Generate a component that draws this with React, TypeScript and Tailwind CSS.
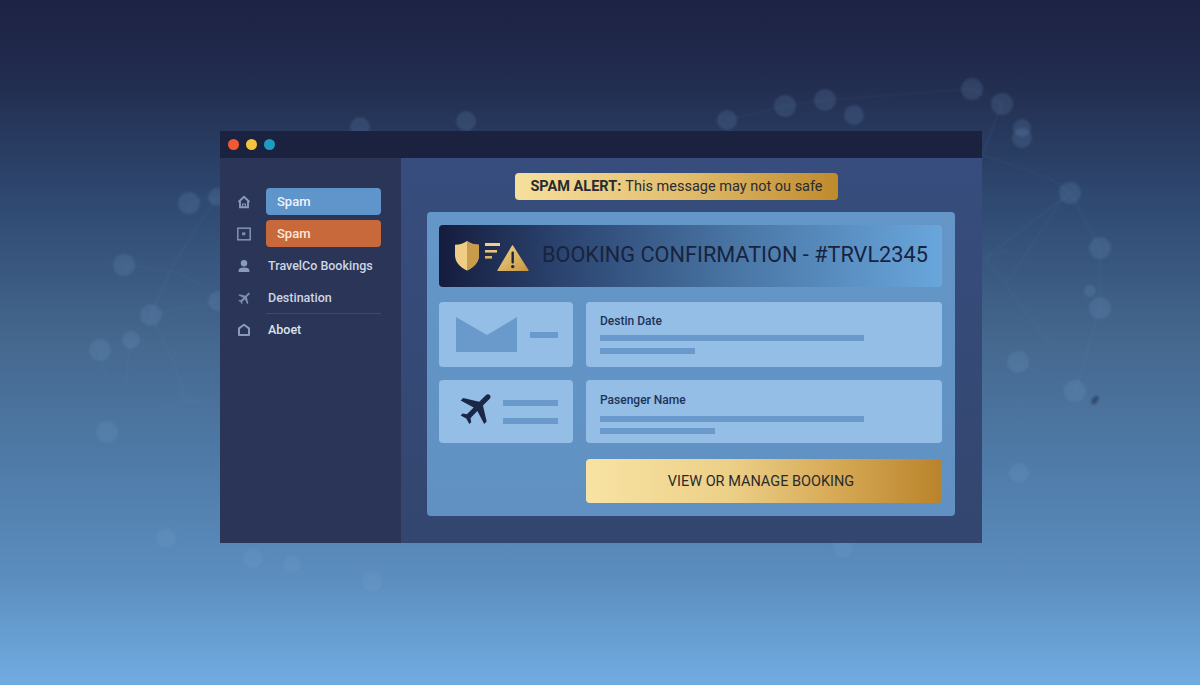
const NODES: [number, number, number][] = [
  [189, 203, 11], [124, 265, 11], [151, 315, 11], [100, 350, 11], [131, 340, 9], [107, 432, 11], [166, 538, 10],
  [217, 197, 9], [218, 301, 10], [360, 127, 10], [466, 121, 10], [727, 120, 10], [785, 106, 11], [825, 100, 11],
  [854, 115, 10], [972, 89, 11], [1002, 104, 11], [1022, 128, 9], [1022, 138, 10], [1070, 193, 11], [1100, 248, 11],
  [1090, 291, 6], [1100, 308, 11], [1018, 362, 11], [1075, 391, 11], [1019, 473, 10], [843, 548, 10], [253, 558, 10],
  [292, 564, 9], [372, 582, 10],
];

const LINES: string[] = [
  "M189 203 L217 197 L176 260 L150 315 L218 301",
  "M124 265 L176 272 L200 285",
  "M151 315 L175 365 L185 400 L211 405",
  "M100 350 L105 375",
  "M131 340 L125 385",
  "M165 405 L211 400",
  "M727 120 L785 106 L825 100 L972 89 L1002 104",
  "M982 155 L1002 104",
  "M982 155 L1050 178 L1070 193 L1100 248 L1100 308 L1075 391",
  "M1070 193 L985 258 L1008 250",
  "M1063 198 L1005 285",
  "M985 258 L1055 350",
  "M1018 362 L1075 391",
];

function Backdrop() {
  return (
    <svg className="absolute inset-0 h-full w-full blur-[0.8px]" viewBox="0 0 1200 685" fill="none">
      <g stroke="#8fb4da" strokeOpacity="0.09" strokeWidth="1.2">
        {LINES.map((d) => (
          <path key={d} d={d} />
        ))}
      </g>
      <g fill="#7ba6d2" fillOpacity="0.17">
        {NODES.map(([cx, cy, r]) => (
          <circle key={`${cx}-${cy}`} cx={cx} cy={cy} r={r} />
        ))}
      </g>
      <ellipse cx="1095" cy="400" rx="3" ry="5" transform="rotate(35 1095 400)" fill="#2b3f5f" fillOpacity="0.7" />
    </svg>
  );
}

function HomeIcon() {
  return (
    <svg viewBox="0 0 14 14" className="h-[14px] w-[14px]" fill="none" stroke="#8a9bb8" strokeWidth="1.9">
      <path d="M1.5 7 7 1.8 12.5 7M3 6v6.2h8V6" />
      <path d="M5.6 12V9h2.8v3" strokeWidth="1.1" />
    </svg>
  );
}

function BoxIcon() {
  return (
    <svg viewBox="0 0 14 14" className="h-[14px] w-[14px]" fill="none" stroke="#7d8eac" strokeWidth="1.6">
      <rect x="0.8" y="1.2" width="12.4" height="11.6" />
      <rect x="5" y="5.4" width="3.4" height="2.8" fill="#7d8eac" stroke="none" />
    </svg>
  );
}

function UserIcon() {
  return (
    <svg viewBox="0 0 14 14" className="h-[14px] w-[14px]" fill="#8a9bb8">
      <circle cx="7" cy="4.2" r="3.2" />
      <path d="M1.6 13v-1.4C1.6 9.8 3.4 8.6 7 8.6s5.4 1.2 5.4 3V13z" />
    </svg>
  );
}

function PlaneIcon({ className, fill }: { className: string; fill: string }) {
  return (
    <svg viewBox="0 0 24 24" className={className} fill={fill}>
      <path
        transform="rotate(45 12 12)"
        d="M21 16v-2l-8-5V3.5c0-.83-.67-1.5-1.5-1.5S10 2.67 10 3.5V9l-8 5v2l8-2.5V19l-2 1.5V22l3.5-1 3.5 1v-1.5L13 19v-5.5l8 2.5z"
      />
    </svg>
  );
}

function AboutIcon() {
  return (
    <svg viewBox="0 0 14 14" className="h-[14px] w-[14px]" fill="none" stroke="#8a9bb8" strokeWidth="2">
      <path d="M7 1.8 12 5.4V12H2V5.4z" strokeLinejoin="round" />
    </svg>
  );
}

function AlertIcons() {
  return (
    <svg viewBox="0 0 76 32" className="h-8 w-[76px] shrink-0" fill="none">
      <defs>
        <linearGradient id="gold-a" x1="0" y1="0" x2="1" y2="1">
          <stop offset="0" stopColor="#f3d68f" />
          <stop offset="1" stopColor="#c4943f" />
        </linearGradient>
      </defs>
      <path d="M13 1 C16 3.5 20 4.6 25 4.8 V15 C25 22 20 27.5 13 30.5 C6 27.5 1 22 1 15 V4.8 C6 4.6 10 3.5 13 1z" fill="#efcd85" />
      <path d="M13 1 C16 3.5 20 4.6 25 4.8 V15 C25 22 20 27.5 13 30.5z" fill="#c99c4d" />
      <rect x="31" y="3" width="15" height="3" fill="#efcf8a" />
      <rect x="31" y="10" width="12" height="2.6" fill="#e6c27a" />
      <rect x="31" y="16" width="7" height="2.6" fill="#d9b163" />
      <path d="M59 5.5 74.5 30 Q75 31 74 31 H44 Q43 31 43.5 30 L58 5.5 Q58.5 4.5 59 5.5z" fill="url(#gold-a)" />
      <rect x="57.5" y="11.5" width="2.4" height="12" rx="1" fill="#1d2540" />
      <circle cx="58.7" cy="26.6" r="1.7" fill="#1d2540" />
    </svg>
  );
}

const NAV_ROWS = [
  { label: "TravelCo Bookings", icon: <UserIcon /> },
  { label: "Destination", icon: <PlaneIcon className="h-4 w-4" fill="#7d8eac" /> },
];

export default function App() {
  return (
    <div className="relative h-[685px] w-[1200px] overflow-hidden bg-[linear-gradient(180deg,#1c2243_0%,#222d4f_12%,#2f4a72_30%,#45688f_50%,#4f7ba8_68%,#5b8dbe_84%,#71ace1_100%)] pl-[220px] pt-[131px] font-['Roboto',sans-serif]">
      <Backdrop />

      <div className="relative flex h-[412px] w-[762px] flex-col">
        {/* Title bar */}
        <div className="flex h-[27px] items-center gap-[7px] bg-[#1b2240] pb-[1px] pl-[8px]">
          <span className="h-[11px] w-[11px] rounded-full bg-[#ee5a36]" />
          <span className="h-[11px] w-[11px] rounded-full bg-[#f2c53d]" />
          <span className="h-[11px] w-[11px] rounded-full bg-[#1f9bc0]" />
        </div>

        <div className="flex flex-1">
          {/* Sidebar */}
          <div className="flex w-[181px] flex-col gap-[5px] bg-[#2a3557] pl-[17px] pr-[20px] pt-[30px]">
            <div className="flex h-[27px] items-center">
              <div className="flex w-[29px] justify-start"><HomeIcon /></div>
              <div className="flex h-[27px] flex-1 items-center rounded-[4px] bg-[#5f95cb] pl-[11px] text-[13px] font-medium text-[#eef4fb]">
                Spam
              </div>
            </div>
            <div className="flex h-[27px] items-center">
              <div className="flex w-[29px] justify-start"><BoxIcon /></div>
              <div className="flex h-[27px] flex-1 items-center rounded-[4px] bg-[#c8693b] pl-[11px] text-[13px] font-medium text-[#f8e9df]">
                Spam
              </div>
            </div>
            {NAV_ROWS.map((row) => (
              <div key={row.label} className="flex h-[27px] items-center">
                <div className="flex w-[31px] justify-start">{row.icon}</div>
                <span className="pt-[1px] text-[12.5px] font-medium text-[#ced6e4]">{row.label}</span>
              </div>
            ))}
            <div className="-my-[3px] ml-[29px] h-px bg-[#3c4a70]" />
            <div className="flex h-[27px] items-center">
              <div className="flex w-[31px] justify-start"><AboutIcon /></div>
              <span className="pt-[2px] text-[12.5px] font-medium text-[#dde3ed]">Aboet</span>
            </div>
          </div>

          {/* Main */}
          <div className="flex flex-1 flex-col bg-[linear-gradient(180deg,#374d7d_0%,#33466f_100%)] pl-[26px] pr-[27px] pt-[15px]">
            <div className="ml-[88px] flex h-[27px] w-[323px] items-center justify-center rounded-[4px] bg-[linear-gradient(90deg,#f6df9d_0%,#e3c070_50%,#bf8a2c_100%)] text-[14.5px] text-[#2a2a33]">
              <span className="font-bold">SPAM ALERT:</span>
              <span className="ml-[4px]">This message may not ou safe</span>
            </div>

            <div className="mt-[12px] flex h-[304px] flex-col rounded-[4px] bg-[linear-gradient(180deg,#6496c8_0%,#6091c2_100%)] pl-[12px] pr-[13px] pt-[13px]">
              <div className="flex h-[62px] items-center rounded-[4px] bg-[linear-gradient(90deg,#151c3d_0%,#2c4571_25%,#4a77a6_60%,#69a6dc_100%)] pl-[15px]">
                <AlertIcons />
                <span className="mb-[2px] ml-[12px] text-[21.7px] text-[#18233f]">
                  BOOKING CONFIRMATION - #TRVL2345
                </span>
              </div>

              <div className="mt-[15px] flex h-[65px] gap-[13px]">
                <div className="flex w-[134px] items-center rounded-[4px] bg-[#94bee6] pl-[17px]">
                  <svg viewBox="0 0 61 35" className="h-[35px] w-[61px]" fill="#6a9acb">
                    <path d="M0 0 L31 18 L61 0 V35 H0z" />
                  </svg>
                  <div className="ml-[13px] h-[6px] w-[28px] bg-[#6a9acb]" />
                </div>
                <div className="flex flex-1 flex-col rounded-[4px] bg-[#94bee6] pl-[14px] pt-[12px]">
                  <span className="text-[12px] font-medium leading-[15px] text-[#1d3358]">Destin Date</span>
                  <div className="mt-[6px] h-[6px] w-[264px] bg-[#6a9acb]" />
                  <div className="mt-[7px] h-[6px] w-[95px] bg-[#6a9acb]" />
                </div>
              </div>

              <div className="mt-[13px] flex h-[63px] gap-[13px]">
                <div className="flex w-[134px] items-center rounded-[4px] bg-[#94bee6] pl-[18px]">
                  <PlaneIcon className="mb-[8px] h-[42px] w-[42px]" fill="#1a2747" />
                  <div className="ml-[4px] flex flex-col gap-[12px]">
                    <div className="h-[6px] w-[55px] bg-[#6a9acb]" />
                    <div className="h-[6px] w-[55px] bg-[#6a9acb]" />
                  </div>
                </div>
                <div className="flex flex-1 flex-col rounded-[4px] bg-[#94bee6] pl-[14px] pt-[13px]">
                  <span className="text-[12px] font-medium leading-[15px] text-[#1d3358]">Pasenger Name</span>
                  <div className="mt-[8px] h-[6px] w-[264px] bg-[#6a9acb]" />
                  <div className="mt-[6px] h-[6px] w-[115px] bg-[#6a9acb]" />
                </div>
              </div>

              <div className="ml-[147px] mt-[16px] flex h-[44px] items-center justify-center rounded-[4px] bg-[linear-gradient(90deg,#f8e3a4_0%,#ecd088_40%,#d5a753_72%,#b9832a_100%)] pr-[6px] pt-[2px] text-[14.5px] text-[#2a2a2e]">
                VIEW OR MANAGE BOOKING
              </div>
            </div>
          </div>
        </div>
      </div>
    </div>
  );
}
